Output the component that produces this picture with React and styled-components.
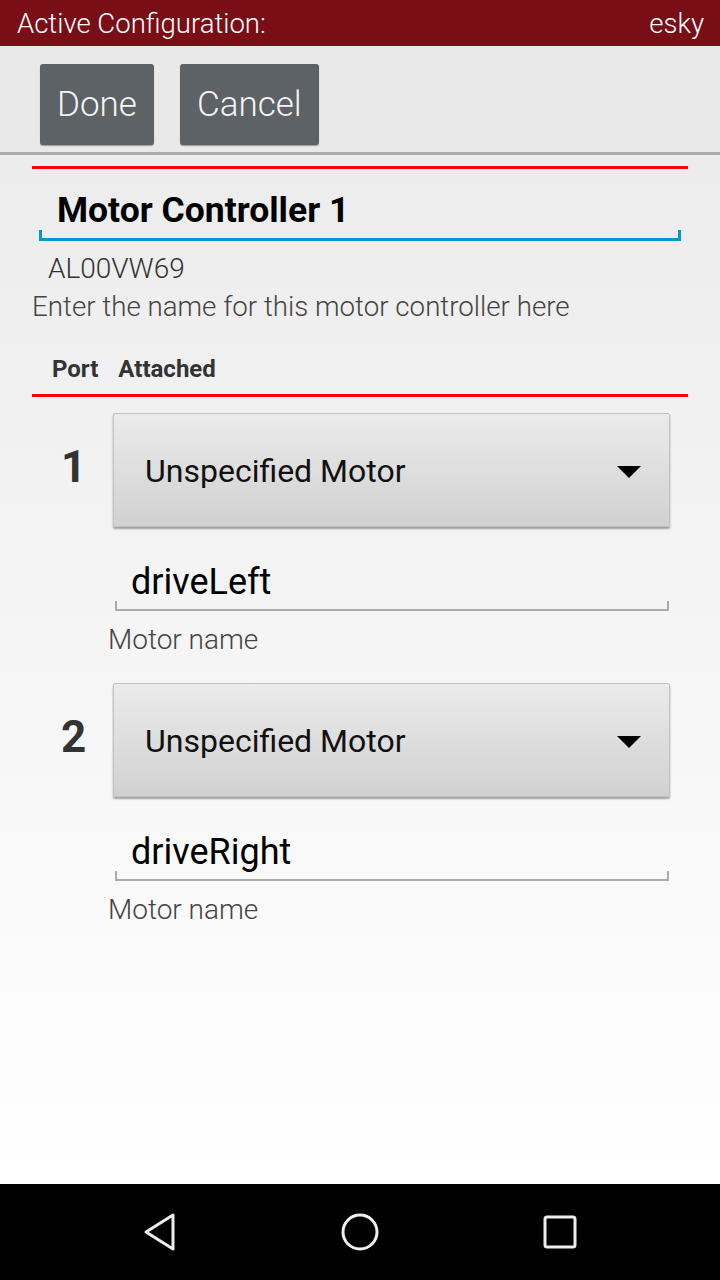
import styled, { createGlobalStyle } from "styled-components";

const GlobalStyle = createGlobalStyle`
  html, body, #root {
    margin: 0;
    height: 100%;
  }
  body {
    font-family: Roboto, "Liberation Sans", sans-serif;
  }
`;

const Screen = styled.div`
  display: flex;
  flex-direction: column;
  height: 1280px;
  width: 720px;
  overflow: hidden;
`;

const TitleBar = styled.div`
  height: 46px;
  flex-shrink: 0;
  background: #790e16;
  color: #fff;
  display: flex;
  justify-content: space-between;
  align-items: center;
  padding: 0 16px 0 17px;
  font-size: 27.5px;
  font-weight: 300;
`;

const Toolbar = styled.div`
  height: 109px;
  flex-shrink: 0;
  box-sizing: border-box;
  background: #e9e9e9;
  border-bottom: 3px solid #a9a9a9;
  display: flex;
  align-items: flex-start;
  gap: 26px;
  padding: 18px 0 0 40px;
`;

const ActionButton = styled.button`
  height: 81px;
  padding: 0 17px;
  background: #5d6266;
  border: none;
  border-radius: 3px;
  box-shadow: 0 1px 1px rgba(0, 0, 0, 0.35);
  color: #f4f4f4;
  font-family: Roboto, sans-serif;
  font-size: 35px;
  font-weight: 300;
`;

const Content = styled.div`
  flex: 1;
  background: linear-gradient(#ececec, #ffffff);
  padding: 11px 32px 0;
`;

const RedRule = styled.div`
  height: 3px;
  background: #ff0000;
`;

const NameField = styled.div`
  margin: 0 7px;
  height: 72px;
  display: flex;
  align-items: center;
  padding: 13px 0 0 18px;
  box-sizing: border-box;
  font-size: 35.5px;
  font-weight: 700;
  color: #000;
  position: relative;
  border-bottom: 3px solid #0099cc;
  &::before,
  &::after {
    content: "";
    position: absolute;
    bottom: 0;
    width: 3px;
    height: 8px;
    background: #0099cc;
  }
  &::before { left: 0; }
  &::after { right: 0; }
`;

const SerialText = styled.div`
  margin: 12px 0 0 16px;
  font-size: 28px;
  line-height: 32px;
  font-weight: 300;
  color: #333;
`;

const HintText = styled.div`
  margin-top: 6px;
  font-size: 27.7px;
  line-height: 32px;
  font-weight: 300;
  color: #444;
`;

const ColumnHeads = styled.div`
  display: flex;
  gap: 20px;
  padding: 32px 0 11px 20px;
  font-size: 24px;
  line-height: 28px;
  font-weight: 700;
  color: #333;
`;

const PortRow = styled.div`
  display: grid;
  grid-template-columns: 81px 557px;
  padding-top: ${(p) => p.top}px;
`;

const PortNumber = styled.div`
  font-size: 44px;
  line-height: 48px;
  font-weight: 700;
  color: #333;
  text-align: center;
  padding: 30px 0 0 2px;
`;

const Spinner = styled.div`
  height: 114px;
  box-sizing: border-box;
  background: linear-gradient(#ebebeb, #d1d1d1);
  border: 1px solid #c2c2c2;
  border-radius: 2px;
  box-shadow: 0 2px 2px rgba(0, 0, 0, 0.35);
  display: flex;
  align-items: center;
  justify-content: space-between;
  padding: 2px 28px 0 31px;
  font-size: 32px;
  color: #111;
`;

const Caret = styled.div`
  width: 0;
  height: 0;
  border-left: 12px solid transparent;
  border-right: 12px solid transparent;
  border-top: 12px solid #000;
  margin-top: 2px;
`;

const MotorFields = styled.div`
  grid-column: 2;
`;

const MotorInput = styled.div`
  margin: 24px 1px 0 2px;
  height: 60px;
  box-sizing: border-box;
  padding: 4px 0 0 16px;
  font-size: 36px;
  color: #000;
  display: flex;
  align-items: center;
  position: relative;
  border-bottom: 2px solid #aaaaaa;
  &::before,
  &::after {
    content: "";
    position: absolute;
    bottom: 0;
    width: 2px;
    height: 8px;
    background: #aaaaaa;
  }
  &::before { left: 0; }
  &::after { right: 0; }
`;

const MotorLabel = styled.div`
  margin: 13px 0 0 -5px;
  font-size: 28px;
  line-height: 32px;
  font-weight: 300;
  color: #444;
`;

const NavBar = styled.div`
  height: 96px;
  flex-shrink: 0;
  background: #000;
  display: flex;
  align-items: center;
  justify-content: center;
  gap: 160px;
`;

const NavIcon = styled.svg`
  width: 40px;
  height: 40px;
`;

const ports = [
  { num: 1, name: "driveLeft", top: 16 },
  { num: 2, name: "driveRight", top: 27 },
];

export default function App() {
  return (
    <Screen>
      <GlobalStyle />
      <TitleBar>
        <span>Active Configuration:</span>
        <span>esky</span>
      </TitleBar>
      <Toolbar>
        <ActionButton>Done</ActionButton>
        <ActionButton>Cancel</ActionButton>
      </Toolbar>
      <Content>
        <RedRule />
        <NameField>Motor Controller 1</NameField>
        <SerialText>AL00VW69</SerialText>
        <HintText>Enter the name for this motor controller here</HintText>
        <ColumnHeads>
          <span>Port</span>
          <span>Attached</span>
        </ColumnHeads>
        <RedRule />
        {ports.map((p) => (
          <PortRow key={p.num} top={p.top}>
            <PortNumber>{p.num}</PortNumber>
            <Spinner>
              <span>Unspecified Motor</span>
              <Caret />
            </Spinner>
            <MotorFields>
              <MotorInput>{p.name}</MotorInput>
              <MotorLabel>Motor name</MotorLabel>
            </MotorFields>
          </PortRow>
        ))}
      </Content>
      <NavBar>
        <NavIcon viewBox="0 0 40 40">
          <path d="M33 3 L33 37 L6 20 Z" fill="none" stroke="#eee" strokeWidth="3" strokeLinejoin="round" />
        </NavIcon>
        <NavIcon viewBox="0 0 40 40">
          <circle cx="20" cy="20" r="17" fill="none" stroke="#eee" strokeWidth="3" />
        </NavIcon>
        <NavIcon viewBox="0 0 40 40">
          <rect x="5" y="5" width="30" height="30" rx="2" fill="none" stroke="#eee" strokeWidth="3" />
        </NavIcon>
      </NavBar>
    </Screen>
  );
}
